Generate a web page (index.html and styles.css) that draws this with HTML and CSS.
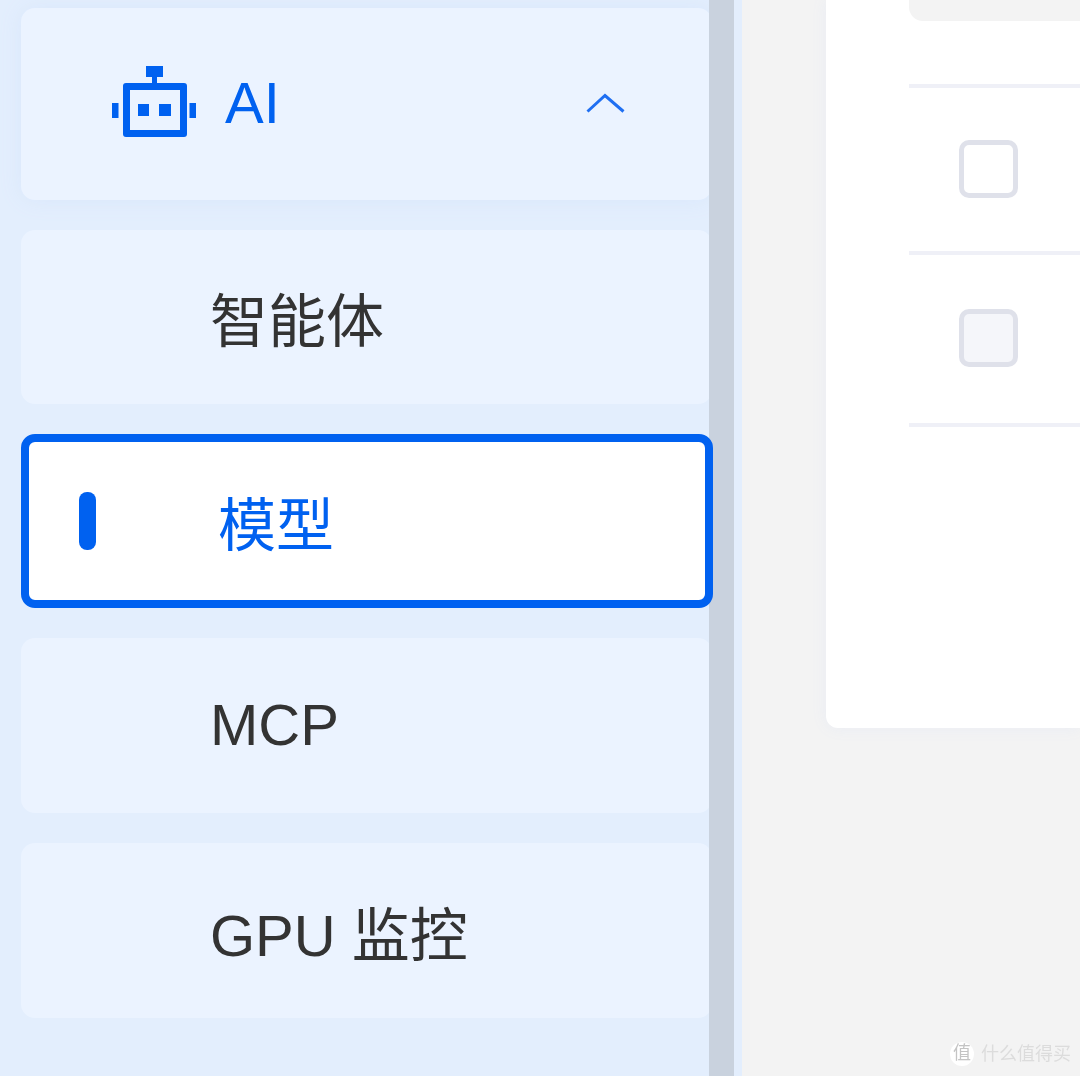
FILE: index.html
```html
<!DOCTYPE html>
<html lang="zh-CN">

<head>
  <meta charset="UTF-8">
  <title>模型</title>
  <link rel="stylesheet" href="styles.css">
</head>

<body>

  <aside class="sidebar">
    <nav class="menu">
      <div class="item item-parent">
        <svg class="robot" viewBox="0 0 84 72" width="84" height="72" fill="#0061f0">
          <path d="M34 1h17v11h-6v6h-5v-6h-6z" />
          <path fill-rule="evenodd" d="M14 18h58a3 3 0 0 1 3 3v48a3 3 0 0 1-3 3H14a3 3 0 0 1-3-3V21a3 3 0 0 1 3-3zm4 7v40h50V25z" />
          <rect x="26" y="39" width="11" height="12" />
          <rect x="47" y="39" width="12" height="12" />
          <rect x="0" y="38" width="6.500" height="15" />
          <rect x="77.500" y="38" width="6.500" height="15" />
        </svg>
        <span class="parent-label">AI</span>
        <svg class="chevron" viewBox="0 0 40 20" width="40" height="20" fill="none" stroke="#1f6ff2" stroke-width="3">
          <path d="M1.500 18.500 19 2.500 37.500 18.500" />
        </svg>
      </div>
      <div class="item">智能体</div>
      <div class="item item-active"><span class="marker"></span>模型</div>
      <div class="item item-tall"><span class="item-text">MCP</span></div>
      <div class="item item-tall">GPU 监控</div>
    </nav>
    <div class="scrollbar"></div>
  </aside>

  <main class="content">
    <section class="card">
      <div class="toolbar"></div>
      <div class="row row-first"><span class="checkbox"></span></div>
      <div class="row row-second"><span class="checkbox checkbox-disabled"></span></div>
      <div class="row-end"></div>
    </section>
  </main>

  <div class="watermark">
    <span class="watermark-badge">值</span>
    <span class="watermark-text">什么值得买</span>
  </div>

</body>

</html>
```

FILE: styles.css
```css
html {
  background: #f3f3f3;
}

body {
  margin: 0;
  height: 1076px;
  overflow: hidden;
  display: flex;
  background: #f3f3f3;
  font-family: "Liberation Sans", "Noto Sans CJK SC", sans-serif;
  color: #333;
  filter: blur(0.6px);
}

.sidebar {
  position: relative;
  flex: 0 0 742px;
  box-sizing: border-box;
  padding: 8px 0 0 21px;
  background: #e3eefd;
}

.menu {
  display: flex;
  flex-direction: column;
  gap: 30px;
  width: 691px;
}

.item {
  display: flex;
  align-items: center;
  box-sizing: border-box;
  height: 174px;
  padding-left: 189px;
  border-radius: 14px;
  background: #ebf3ff;
  font-size: 58px;
}

.item-tall {
  height: 175px;
}

.item-text {
  margin-top: -3px;
}

.item-parent {
  height: 192px;
  padding: 0 86px 0 91px;
  color: #0061f0;
  box-shadow: 0 0 22px #d9e7fb;
}

.robot {
  margin-top: -6px;
}

.parent-label {
  flex: 1;
  margin: -4px 0 0 29px;
}

.chevron {
  margin-top: -3px;
}

.item-active {
  position: relative;
  z-index: 2;
  padding-left: 50px;
  width: 692px;
  border: 8px solid #0061f0;
  background: #fff;
  color: #0061f0;
}

.marker {
  width: 17px;
  height: 58px;
  margin-right: 122px;
  border-radius: 8px;
  background: #0061f0;
}

.scrollbar {
  position: absolute;
  top: 0;
  bottom: 0;
  left: 709px;
  width: 25px;
  background: #c9d2de;
}

.content {
  flex: 1;
  padding-left: 84px;
}

.card {
  box-sizing: border-box;
  height: 728px;
  padding-left: 83px;
  border-bottom-left-radius: 12px;
  background: #fff;
  box-shadow: 0 0 16px #e9ecf4;
}

.toolbar {
  height: 21px;
  margin-bottom: 63px;
  border-bottom-left-radius: 14px;
  background: #f3f3f3;
}

.row {
  display: flex;
  align-items: center;
  box-sizing: border-box;
  padding-left: 50px;
  border-top: 4px solid #eff0f7;
}

.row-first {
  height: 167px;
  padding-bottom: 2px;
}

.row-second {
  height: 172px;
  padding-bottom: 2px;
}

.row-end {
  border-top: 4px solid #eff0f7;
}

.checkbox {
  box-sizing: border-box;
  width: 59px;
  height: 58px;
  border: 5px solid #dfe1ea;
  border-radius: 10px;
  background: #fff;
}

.checkbox-disabled {
  background: #f5f6fa;
}

.watermark {
  position: absolute;
  left: 950px;
  top: 1042px;
  display: flex;
  align-items: center;
  gap: 7px;
  font-size: 18px;
  color: #dcdcdc;
}

.watermark-badge {
  width: 24px;
  height: 24px;
  border-radius: 50%;
  background: #fff;
  color: #c4c4c4;
  text-align: center;
  line-height: 22px;
}

.watermark-text {
  margin-top: -4px;
}
```
